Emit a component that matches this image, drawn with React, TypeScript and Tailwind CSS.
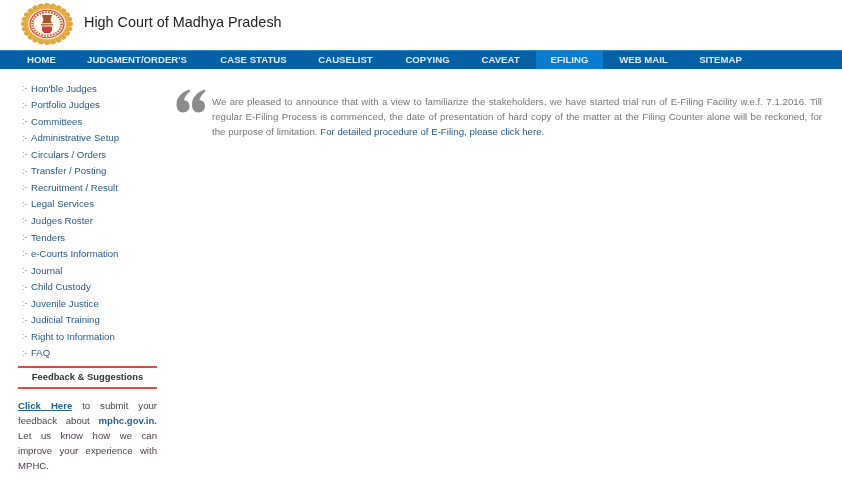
const NAV: [string, number, boolean?][] = [
  ["HOME", 65],
  ["JUDGMENT/ORDER'S", 132],
  ["CASE STATUS", 101],
  ["CAUSELIST", 83],
  ["COPYING", 81],
  ["CAVEAT", 68],
  ["EFILING", 67, true],
  ["WEB MAIL", 81],
  ["SITEMAP", 73],
];

const LINKS = [
  "Hon'ble Judges", "Portfolio Judges", "Committees", "Administrative Setup", "Circulars / Orders",
  "Transfer / Posting", "Recruitment / Result", "Legal Services", "Judges Roster", "Tenders",
  "e-Courts Information", "Journal", "Child Custody", "Juvenile Justice", "Judicial Training",
  "Right to Information", "FAQ",
];

function Emblem() {
  const rays = Array.from({ length: 24 }, (_, i) => (i * 360) / 24);
  return (
    <svg width="52" height="42" viewBox="0 0 52 52" preserveAspectRatio="none" className="shrink-0 blur-[0.4px]">
      {rays.map((a) => (
        <circle key={a} cx="26" cy="3" r="3" fill="#e0a83c" transform={`rotate(${a} 26 26)`} />
      ))}
      <circle cx="26" cy="26" r="22" fill="#e4ad45" />
      <circle cx="26" cy="26" r="19" fill="#fbf3df" />
      <circle cx="26" cy="26" r="17" fill="none" stroke="#d6403a" strokeWidth="1.200" />
      <circle cx="26" cy="26" r="14.500" fill="none" stroke="#c94f3f" strokeWidth="2.500" strokeDasharray="1.500 1.500" />
      <circle cx="26" cy="26" r="11.500" fill="#fffdf6" />
      <path d="M21 15h10l-1.500 6 1.500 4H21l1.500-4z" fill="#a8532f" />
      <rect x="20" y="26" width="12" height="2" fill="#b97a3a" />
      <path d="M21 29h10v5l-2 3h-6l-2-3z" fill="#cc3f3f" />
    </svg>
  );
}

export default function App() {
  return (
    <div className="w-[842px] h-[486px] overflow-hidden bg-white font-['Liberation_Sans',Arial,sans-serif]">
      <header className="h-[50px] flex items-center pl-[21px] gap-[11px] pb-[3px]">
        <Emblem />
        <span className="text-[14.400px] text-[#222] blur-[0.3px] -mt-[1px]">High Court of Madhya Pradesh</span>
      </header>

      <nav className="h-[19px] flex pl-[6px] bg-[#0560a6] border-t border-[#2b8fd6]">
        {NAV.map(([label, w, active]) => (
          <div
            key={label}
            style={{ width: w }}
            className={`flex items-center justify-center first:pl-[6px] nth-6:pr-[3px] text-[9.600px] font-bold text-[#dcebf6] blur-[0.4px] ${active ? "bg-[#0a7ccf]" : ""}`}
          >
            {label}
          </div>
        ))}
      </nav>

      <div className="flex">
        <aside className="w-[139px] ml-[18px] shrink-0 pt-[11.500px]">
          <ul>
            {LINKS.map((l) => (
              <li key={l} className="h-[16.560px] flex items-center text-[9.600px] text-[#2b5a85] blur-[0.4px]">
                <span className="w-[9px] ml-[4px] text-[9px] text-[#9a9a9a]">:-</span>
                {l}
              </li>
            ))}
          </ul>
          <div className="mt-[4px] h-[23px] border-y-2 border-[#e2474b] flex items-center justify-center text-[9.400px] font-bold text-[#333] blur-[0.4px]">
            Feedback &amp; Suggestions
          </div>
          <div className="mt-[9px] text-[9.600px] leading-[15px] text-[#4a3f4a] blur-[0.4px] text-justify [text-align-last:justify]">
            <div>
              <a className="underline text-[#26648f] font-bold">Click Here</a> to submit your
            </div>
            <div>
              feedback about <span className="text-[#26648f] font-bold">mphc.gov.in.</span>
            </div>
            <div>Let us know how we can</div>
            <div>improve your experience with</div>
            <div className="[text-align-last:left]">MPHC.</div>
          </div>
        </aside>

        <main className="flex-1 flex pl-[19px] pr-[20px] pt-[20px]">
          <svg width="30" height="24" viewBox="0 0 30 24" className="shrink-0 mr-[6px] blur-[0.3px]">
            <path d="M13.500 0.500C6 3 0.500 8 0.500 15.500c0 5 2.500 8 6.500 8s6.500-2.800 6.500-6.500c0-3.500-2.300-5.800-5.500-5.800 0.500-3 2.500-6 6-9z" fill="#8c8c8c" />
            <path d="M29 0.500C21.500 3 16 8 16 15.500c0 5 2.500 8 6.500 8S29 20.700 29 17c0-3.500-2.300-5.800-5.500-5.800 0.500-3 2.500-6 6-9z" fill="#8c8c8c" />
          </svg>
          <p className="mt-[5px] text-[9.700px] leading-[15px] text-[#777] text-justify blur-[0.4px]">
            We are pleased to announce that with a view to familiarize the stakeholders, we have started trial run of E-Filing Facility w.e.f. 7.1.2016. Till regular E-Filing Process is commenced, the date of presentation of hard copy of the matter at the Filing Counter alone will be reckoned, for the purpose of limitation.{" "}
            <span className="text-[#2b5a85]">For detailed procedure of E-Filing, please click here.</span>
          </p>
        </main>
      </div>
    </div>
  );
}
